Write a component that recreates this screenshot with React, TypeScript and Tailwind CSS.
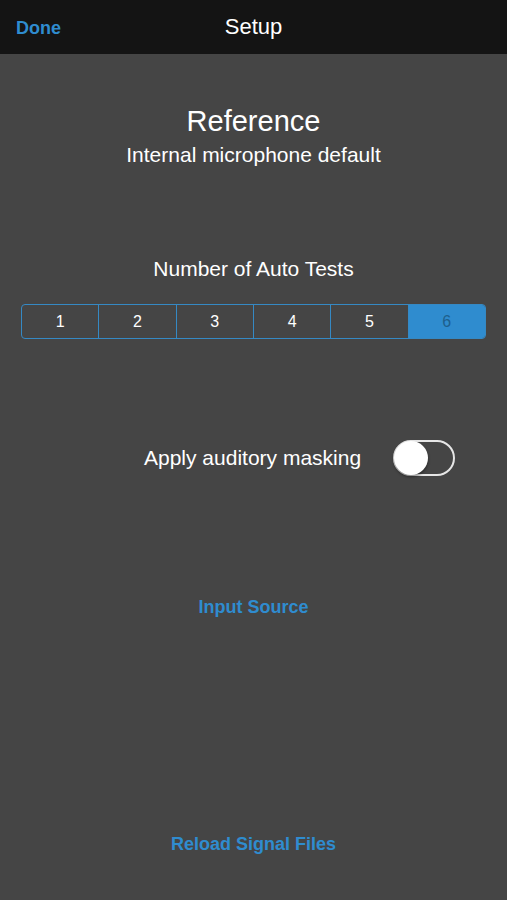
import React from "react";

export default function App() {
  const segs = ["1", "2", "3", "4", "5", "6"];
  return (
    <div className="w-[507px] h-[900px] bg-[#454545] flex flex-col" style={{ fontFamily: '"Liberation Sans", Arial, sans-serif' }}>
      <div className="h-[54px] bg-[#141414] relative flex items-center justify-center shrink-0">
        <span className="absolute left-[16px] top-[17px] text-[18px] font-bold text-[#2f8ccf] leading-[22px]">Done</span>
        <span className="text-[22px] text-white leading-[26px] mb-[1px]">Setup</span>
      </div>
      <div className="flex flex-col items-center">
        <div className="mt-[50px] text-[29px] leading-[34px] text-white">Reference</div>
        <div className="mt-[5px] text-[21px] leading-[24px] text-white">Internal microphone default</div>
        <div className="mt-[90px] text-[21px] leading-[24px] text-white">Number of Auto Tests</div>
        <div className="mt-[23px] w-[465px] h-[35px] flex border border-[#3589c4] rounded-[4px] overflow-hidden">
          {segs.map((s, i) => (
            <div
              key={s}
              className={
                i === 5
                  ? "flex-1 flex items-center justify-center bg-[#2f8ccf] text-[#1e5f8c] text-[16px]"
                  : "flex-1 flex items-center justify-center border-r border-[#3589c4] text-white text-[16px]"
              }
            >
              {s}
            </div>
          ))}
        </div>
        <div className="mt-[101px] w-full flex items-center h-[36px]">
          <span className="ml-[144px] text-[21px] leading-[24px] text-white">Apply auditory masking</span>
          <div className="ml-[32px] w-[62px] h-[36px] rounded-full border-2 border-[#e6e6e6] relative">
            <div className="absolute left-[-1px] top-[-1px] w-[34px] h-[34px] rounded-full bg-white shadow-[0_2px_3px_rgba(0,0,0,0.4)]" />
          </div>
        </div>
        <div className="mt-[120px] text-[18px] leading-[22px] font-bold text-[#2f8ccf]">Input Source</div>
        <div className="mt-[215px] text-[18px] leading-[22px] font-bold text-[#2f8ccf]">Reload Signal Files</div>
      </div>
    </div>
  );
}
